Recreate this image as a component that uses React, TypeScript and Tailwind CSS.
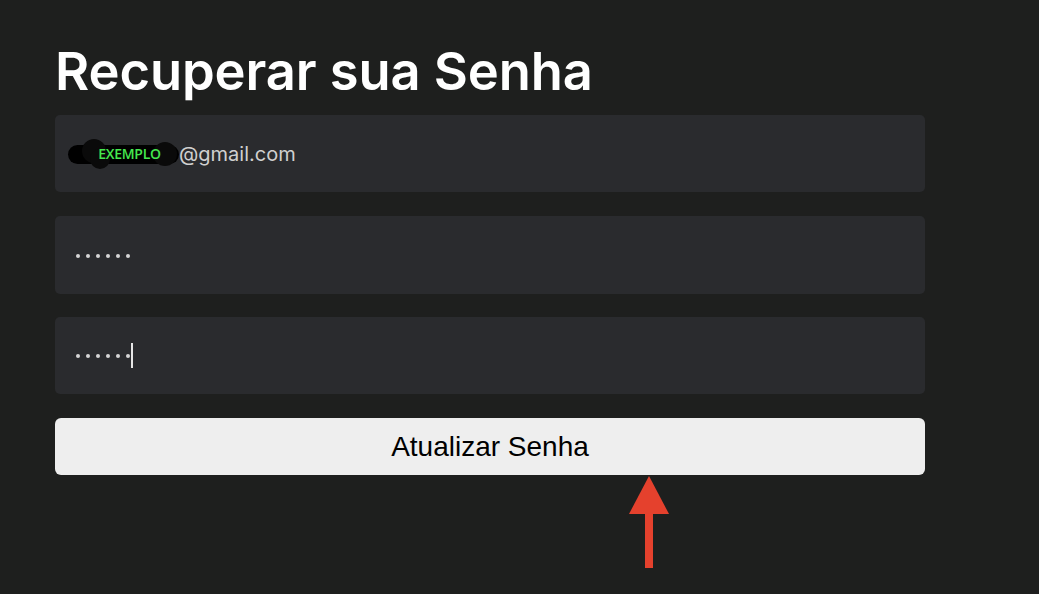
import React from "react";

function Dots({ cursor }: { cursor?: boolean }) {
  return (
    <div className="flex items-center">
      <div className="flex items-center gap-[6px]">
        {[0, 1, 2, 3, 4, 5].map((i) => (
          <div key={i} className="w-[4px] h-[4px] rounded-full bg-[#d6d6d6]" />
        ))}
      </div>
      {cursor && <div className="ml-[1px] w-[2px] h-[25px] bg-[#e6e6e6]" />}
    </div>
  );
}

export default function App() {
  return (
    <div className="w-[1039px] h-[594px] bg-[#1e1f1e] overflow-hidden" style={{ fontFamily: "Inter, 'Liberation Sans', sans-serif" }}>
      <div className="pl-[55px] w-[925px] pt-[37px] flex flex-col">
        <h1 className="text-[52.5px] leading-[68px] font-semibold text-white tracking-[-0.1px] mb-[10px]">Recuperar sua Senha</h1>
        <div className="h-[77px] rounded-[5px] bg-[#2a2b2e] flex items-center pl-[13px]">
          <div className="relative w-[111px] h-[30px] flex items-center justify-center">
            <div className="absolute left-[0px] top-[6px] w-[111px] h-[19px] rounded-full bg-black" />
            <div className="absolute left-[14px] top-[0px] w-[24px] h-[24px] rounded-full bg-[#0a0a0a]" />
            <div className="absolute left-[22px] top-[10px] w-[20px] h-[20px] rounded-full bg-[#0a0a0a]" />
            <div className="absolute left-[85px] top-[3px] w-[24px] h-[24px] rounded-full bg-[#0a0a0a]" />
            <span className="relative text-[14px] font-semibold text-[#45e84f] pl-[12px] tracking-[-0.3px]" style={{ fontFamily: "'Open Sans', sans-serif" }}>EXEMPLO</span>
          </div>
          <span className="text-[20px] text-[#d0d0d0]">@gmail.com</span>
        </div>
        <div className="mt-[24px] h-[78px] rounded-[5px] bg-[#2a2b2e] flex items-center pt-[2px]" style={{ paddingLeft: 21 }}>
          <Dots />
        </div>
        <div className="mt-[23px] h-[77px] rounded-[5px] bg-[#2a2b2e] flex items-center" style={{ paddingLeft: 21 }}>
          <Dots cursor />
        </div>
        <button className="mt-[24px] h-[57px] rounded-[6px] bg-[#eeeeee] text-[28px] text-black flex items-center justify-center" style={{ fontFamily: "'Liberation Sans', Arial, sans-serif" }}>
          Atualizar Senha
        </button>
        <div className="relative h-[100px]">
          <svg className="absolute left-[573px] top-[0px]" width="42" height="95" viewBox="0 0 42 95">
            <polygon points="21,1 41,39 1,39" fill="#e5412d" />
            <rect x="17" y="38" width="8" height="55" fill="#e5412d" />
          </svg>
        </div>
      </div>
    </div>
  );
}
